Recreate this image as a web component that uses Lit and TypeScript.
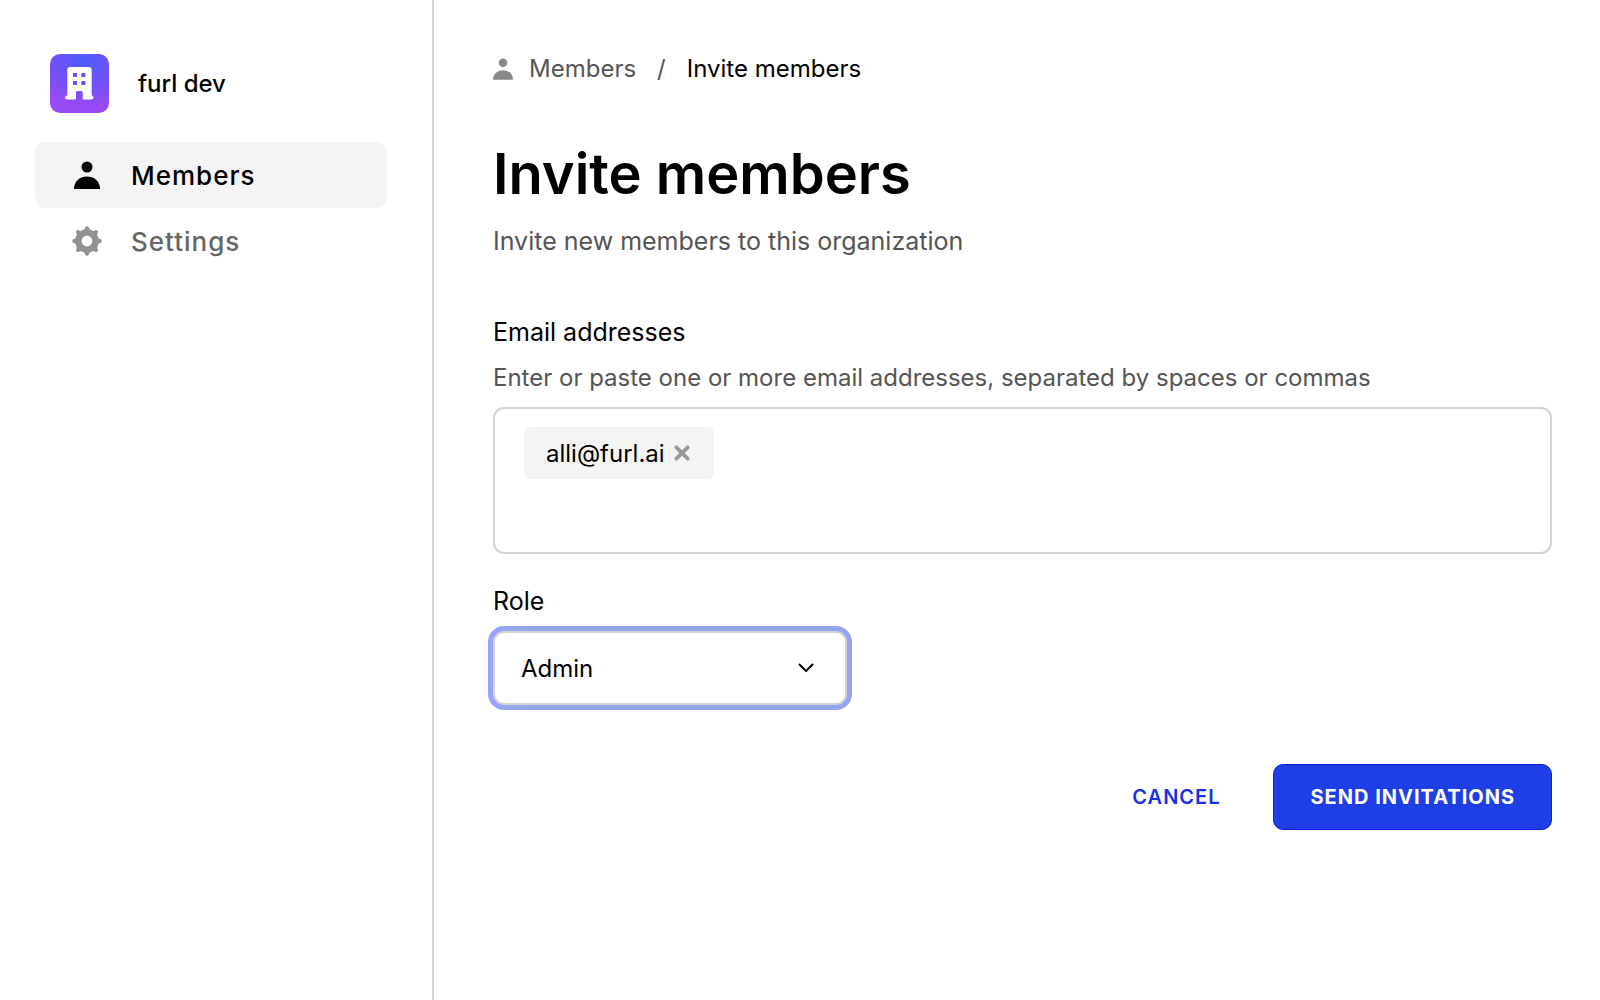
import { LitElement, html, css, svg } from "lit";
import { customElement, state } from "lit/decorators.js";
import { classMap } from "lit/directives/class-map.js";

const personShape = svg`
  <circle cx="13" cy="6" r="5.5"></circle>
  <path d="M0 28 V27 C0.5 20 6 15.5 13 15.5 S25.5 20 26 27 V28 Z"></path>
`;

const gearShape = (() => {
  const teeth = [0, 45, 90, 135, 180, 225, 270, 315].map(
    (angle) => svg`<path d="M10.5 5 Q12.8 3.6 13 2 Q13.2 0.3 15 0.3 T17 2 Q17.2 3.6 19.5 5 Z" transform="rotate(${angle} 15 15)"></path>`
  );
  return svg`
    ${teeth}
    <circle cx="15" cy="15" r="8.6" fill="none" stroke="currentColor" stroke-width="6.4"></circle>
  `;
})();

const NAV = [
  { id: "members", label: "Members", shape: personShape, viewBox: "-2 -1 30 30" },
  { id: "settings", label: "Settings", shape: gearShape, viewBox: "0 0 30 30" },
];

@customElement("app-sidebar")
export class AppSidebar extends LitElement {
  static styles = css`
    :host {
      display: block;
      box-sizing: border-box;
      padding: 54px 45px 32px 35px;
      border-right: 2px solid #d6d6d6;
    }
    .org {
      display: flex;
      align-items: center;
      gap: 29px;
      padding: 0 15px;
      margin-bottom: 29px;
      font-size: 24px;
      line-height: 32px;
      font-weight: 500;
    }
    .logo {
      display: block;
      flex: none;
      width: 59px;
      height: 59px;
      border-radius: 10px;
      background: radial-gradient(85% 80% at 58% 12%, #4f5bfa 5%, #7350f8 60%, #984af5 100%);
    }
    .nav {
      display: flex;
      flex-direction: column;
    }
    .item {
      display: flex;
      align-items: center;
      gap: 29px;
      height: 66px;
      padding: 0 37px;
      border-radius: 11px;
      color: #666;
      font-size: 26px;
      font-weight: 500;
      letter-spacing: 1px;
      text-decoration: none;
    }
    .icon {
      flex: none;
      width: 30px;
      height: 30px;
      fill: currentColor;
      color: #929292;
    }
    .current {
      background: #f4f4f4;
      color: #000;
    }
    .current .icon {
      color: #000;
    }
  `;

  render() {
    return html`
      <div class="org">
        <svg class="logo" viewBox="0 0 59 59" aria-hidden="true">
          <path
            fill="#fff"
            fill-rule="evenodd"
            d="M20.5 13 H38.5 Q41.7 13 41.7 16.2 V41.5 Q43.5 41.7 43.5 43.5 T41.5 45.5 H34 Q32.7 45.5 32.7 44.2 V38.5 Q32.7 37 31.2 37 H27.5 Q26 37 26 38.5 V44.2 Q26 45.5 24.7 45.5 H17 Q15 45.5 15 43.5 T17.3 41.5 V16.2 Q17.3 13 20.5 13 Z
              M23 19 V23 H27 V19 Z M31.3 19 V23 H35.3 V19 Z
              M23 27 V31 H27 V27 Z M31.3 27 V31 H35.3 V27 Z"
          ></path>
        </svg>
        <span>furl dev</span>
      </div>
      <nav class="nav" aria-label="Organization">
        ${NAV.map(
          (item) => html`
            <a
              href="#${item.id}"
              class=${classMap({ item: true, current: item.id === "members" })}
              aria-current=${item.id === "members" ? "page" : "false"}
            >
              <svg class="icon" viewBox=${item.viewBox} aria-hidden="true">${item.shape}</svg>
              <span>${item.label}</span>
            </a>
          `
        )}
      </nav>
    `;
  }
}

@customElement("invite-form")
export class InviteForm extends LitElement {
  @state() private emails = ["alli@furl.ai"];

  static styles = css`
    :host {
      display: block;
    }
    .form {
      display: flex;
      flex-direction: column;
      align-items: stretch;
    }
    .label {
      font-size: 25px;
      line-height: 32px;
    }
    .hint {
      margin: 14px 0 13px;
      font-size: 24px;
      line-height: 32px;
      color: #555;
    }
    .emails {
      display: flex;
      flex-wrap: wrap;
      align-content: flex-start;
      gap: 12px;
      box-sizing: border-box;
      min-height: 147px;
      margin-bottom: 31px;
      padding: 18px 29px;
      border: 2px solid #d4d4d4;
      border-radius: 11px;
    }
    .chip {
      display: flex;
      align-items: center;
      gap: 9px;
      height: 52px;
      padding: 0 24px 0 22px;
      border-radius: 6px;
      background: #f4f4f4;
      font-size: 24px;
    }
    .remove {
      display: block;
      padding: 0;
      border: 0;
      background: none;
      color: #999;
      cursor: pointer;
    }
    .cross {
      display: block;
      width: 16px;
      height: 16px;
      fill: none;
      stroke: currentColor;
      stroke-width: 4;
      stroke-linecap: round;
    }
    .entry {
      flex: 1;
      min-width: 160px;
      height: 52px;
      padding: 0;
      border: 0;
      outline: 0;
      background: none;
      font: inherit;
      font-size: 24px;
    }
    .picker {
      display: grid;
      align-items: center;
      width: 354px;
      max-width: 100%;
      margin: 14px 0 59px;
    }
    .select {
      grid-area: 1 / 1;
      appearance: none;
      box-sizing: border-box;
      width: 100%;
      height: 74px;
      padding: 0 60px 0 26px;
      border: 2px solid #d4d4d4;
      border-radius: 11px;
      outline: 0;
      background: #fff;
      box-shadow: 0 0 0 5px #95a5f3;
      color: #000;
      font: inherit;
      font-size: 24px;
    }
    .chevron {
      grid-area: 1 / 1;
      justify-self: end;
      width: 16px;
      height: 10px;
      margin-right: 33px;
      fill: none;
      stroke: #000;
      stroke-width: 2;
      stroke-linecap: round;
      stroke-linejoin: round;
      pointer-events: none;
    }
    .actions {
      display: flex;
      justify-content: flex-end;
      gap: 16px;
    }
    .button {
      height: 66px;
      padding: 0 36px;
      border: 1px solid transparent;
      border-radius: 10px;
      background: none;
      color: #1733e0;
      font: inherit;
      font-size: 20px;
      font-weight: 600;
      letter-spacing: 1px;
      text-transform: uppercase;
      cursor: pointer;
    }
    .primary {
      border-color: #0a1fdf;
      background: #1e3fe6;
      color: #fff;
      font-weight: 700;
    }
  `;

  private remove(email: string) {
    this.emails = this.emails.filter((e) => e !== email);
  }

  private addFrom(event: KeyboardEvent) {
    if (![" ", ",", "Enter"].includes(event.key)) return;
    event.preventDefault();
    const field = event.target as HTMLInputElement;
    const value = field.value.trim();
    if (value && !this.emails.includes(value)) this.emails = [...this.emails, value];
    field.value = "";
  }

  render() {
    return html`
      <form class="form" @submit=${(e: Event) => e.preventDefault()}>
        <label class="label" for="emails">Email addresses</label>
        <p class="hint" id="hint">
          Enter or paste one or more email addresses, separated by spaces or commas
        </p>
        <div class="emails">
          ${this.emails.map(
            (email) => html`
              <span class="chip">
                <span>${email}</span>
                <button
                  class="remove"
                  type="button"
                  aria-label="Remove ${email}"
                  @click=${() => this.remove(email)}
                >
                  <svg class="cross" viewBox="0 0 17 17" aria-hidden="true">
                    <path d="M2.5 2.5 L14.5 14.5 M14.5 2.5 L2.5 14.5"></path>
                  </svg>
                </button>
              </span>
            `
          )}
          <input class="entry" id="emails" type="text" aria-describedby="hint" @keydown=${this.addFrom} />
        </div>
        <label class="label" for="role">Role</label>
        <div class="picker">
          <select class="select" id="role">
            <option selected>Admin</option>
          </select>
          <svg class="chevron" viewBox="0 0 16 10" aria-hidden="true">
            <path d="M1.5 1.5 L8 8 L14.5 1.5"></path>
          </svg>
        </div>
        <div class="actions">
          <button class="button" type="button">Cancel</button>
          <button class="button primary" type="submit">Send invitations</button>
        </div>
      </form>
    `;
  }
}

@customElement("app-root")
export class AppRoot extends LitElement {
  static styles = css`
    :host {
      display: grid;
      grid-template-columns: 434px minmax(0, 1fr);
      min-height: 100vh;
      background: #fff;
      color: #000;
      font-family: Inter, "Liberation Sans", sans-serif;
    }
    .main {
      padding: 53px 48px 48px 59px;
    }
    .crumbs {
      display: flex;
      align-items: center;
      gap: 21px;
      margin-bottom: 53px;
      font-size: 24px;
      line-height: 32px;
    }
    .parent {
      display: flex;
      align-items: center;
      gap: 16px;
      color: #555;
      text-decoration: none;
    }
    .person {
      width: 20px;
      height: 22px;
      fill: #888;
    }
    .slash {
      color: #555;
    }
    .title {
      margin: 0 0 15px;
      font-size: 56px;
      line-height: 72px;
      font-weight: 600;
    }
    .lead {
      margin: 0 0 59px;
      font-size: 25px;
      line-height: 32px;
      color: #555;
    }
  `;

  render() {
    return html`
      <app-sidebar></app-sidebar>
      <main class="main">
        <nav class="crumbs" aria-label="Breadcrumb">
          <a class="parent" href="#members">
            <svg class="person" viewBox="0 0 26 28" aria-hidden="true">${personShape}</svg>
            <span>Members</span>
          </a>
          <span class="slash">/</span>
          <span aria-current="page">Invite members</span>
        </nav>
        <h1 class="title">Invite members</h1>
        <p class="lead">Invite new members to this organization</p>
        <invite-form></invite-form>
      </main>
    `;
  }
}
